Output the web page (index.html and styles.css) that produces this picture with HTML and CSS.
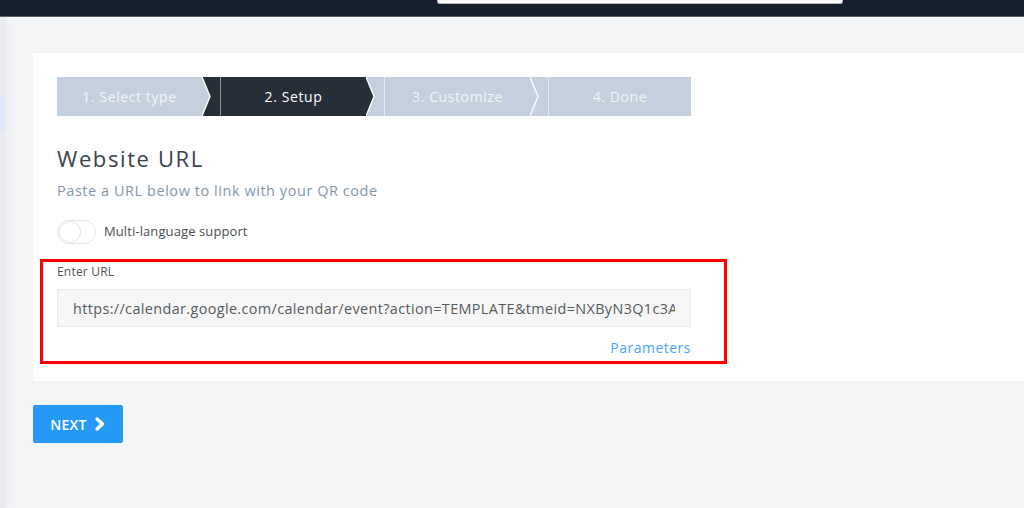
FILE: index.html
```html
<!DOCTYPE html>
<html lang="en">
<head>
<meta charset="utf-8">
<title>Website URL</title>
<link rel="stylesheet" href="styles.css">
</head>
<body>
<header class="topbar">
  <div class="search"></div>
</header>
<div class="layout">
  <aside class="sidebar"><div class="side-active"></div></aside>
  <main class="content">
    <section class="card">
      <nav class="steps">
        <div class="step light">1. Select type</div>
        <div class="bridge to-dark"><svg width="18" height="39" viewBox="0 0 18 39"><polygon points="0,0 8,19.5 0,39" fill="#c4d0dd"/><polyline points="0,0 8,19.5 0,39" fill="none" stroke="#fff" stroke-width="1.4"/></svg></div>
        <div class="step dark">2. Setup</div>
        <div class="bridge to-light"><svg width="18" height="39" viewBox="0 0 18 39"><polygon points="0,0 8,19.5 0,39" fill="#262e37"/><polyline points="0,0 8,19.5 0,39" fill="none" stroke="#fff" stroke-width="1.4"/></svg></div>
        <div class="step light">3. Customize</div>
        <div class="bridge to-light"><svg width="18" height="39" viewBox="0 0 18 39"><polygon points="0,0 8,19.5 0,39" fill="#c4d0dd"/><polyline points="0,0 8,19.5 0,39" fill="none" stroke="#fff" stroke-width="1.4"/></svg></div>
        <div class="step light last">4. Done</div>
      </nav>

      <h1 class="title">Website URL</h1>
      <p class="subtitle">Paste a URL below to link with your QR code</p>

      <label class="toggle-row">
        <span class="toggle"><span class="knob"></span></span>
        <span class="toggle-label">Multi-language support</span>
      </label>

      <div class="url-group">
        <div class="highlight"></div>
        <div class="field-label">Enter URL</div>
        <input class="url-input" type="text" readonly value="https://calendar.google.com/calendar/event?action=TEMPLATE&amp;tmeid=NXByN3Q1c3A4bWZzaGpkNmJvZ2R2aGN0">
        <div class="params-row"><a class="params" href="#">Parameters</a></div>
      </div>
    </section>

    <button class="next-btn" type="button">NEXT
      <svg width="12" height="14" viewBox="0 0 12 14"><polyline points="3,2 8.5,7 3,12" fill="none" stroke="#fff" stroke-width="3.2" stroke-linecap="round" stroke-linejoin="round"/></svg>
    </button>
  </main>
</div>
</body>
</html>
```

FILE: styles.css
```css
* { box-sizing: border-box; }

html, body {
  margin: 0;
  padding: 0;
  height: 100%;
}

body {
  font-family: "Open Sans", "Liberation Sans", sans-serif;
  background: #f3f4f6;
  overflow: hidden;
  display: flex;
  flex-direction: column;
}

.topbar {
  height: 17px;
  flex: none;
  background: #16202d;
  border-bottom: 1px solid #5a626c;
  position: relative;
}

.search {
  position: absolute;
  left: 437px;
  top: 0;
  width: 406px;
  height: 4px;
  background: #ffffff;
  border: 1px solid #b8bcc2;
  border-top: none;
  border-radius: 0 0 3px 3px;
}

.layout {
  flex: 1;
  display: flex;
}

.sidebar {
  width: 5px;
  flex: none;
  background: #e9ebee;
  padding-top: 79px;
  box-shadow: 2px 0 6px rgba(0, 0, 0, 0.04);
}

.side-active {
  height: 35px;
  background: #dde9f8;
}

.content {
  flex: 1;
  padding: 36px 0 0 28px;
}

.card {
  background: #ffffff;
  padding: 24px 24px 18px 24px;
  height: 328px;
}

.steps {
  display: flex;
  height: 39px;
  width: 634px;
}

.step {
  flex: none;
  width: 145px;
  height: 39px;
  display: flex;
  align-items: center;
  justify-content: center;
  font-size: 14px;
  font-weight: 500;
  letter-spacing: 0.6px;
}

.step.light {
  background: #c4d0dd;
  color: #f1f4f8;
}

.step.dark {
  background: #262e37;
  color: #ffffff;
  border-left: 1px solid #8e959d;
  width: 146px;
}

.bridge + .step.light {
  border-left: 1px solid #e6ebf1;
  width: 146px;
}

.bridge + .step.last {
  width: 143px;
}

.bridge {
  flex: none;
  width: 18px;
  height: 39px;
}

.bridge svg { display: block; }

.bridge.to-dark { background: #262e37; }
.bridge.to-light { background: #c4d0dd; }

.title {
  margin: 28px 0 0 0;
  font-size: 22px;
  line-height: 28px;
  font-weight: 400;
  letter-spacing: 1.6px;
  color: #39424d;
}

.subtitle {
  margin: 9px 0 0 0;
  font-size: 14.5px;
  line-height: 20px;
  color: #8597ab;
  letter-spacing: 0.55px;
}

.toggle-row {
  display: flex;
  align-items: center;
  gap: 8px;
  margin-top: 19px;
}

.toggle {
  width: 39px;
  height: 24px;
  border: 1px solid #e2e5e9;
  border-radius: 12px;
  background: #ffffff;
  display: flex;
  align-items: center;
  padding: 0 1px;
}

.knob {
  width: 22px;
  height: 22px;
  border-radius: 50%;
  background: #ffffff;
  border: 1px solid #e2e5e9;
}

.toggle-label {
  font-size: 13px;
  color: #4a4f55;
  letter-spacing: 0.1px;
  position: relative;
  top: -1px;
}

.url-group {
  position: relative;
  margin-top: 20px;
  width: 634px;
}

.highlight {
  position: absolute;
  left: -17px;
  top: -5px;
  width: 687px;
  height: 105px;
  border: 3px solid #ff0000;
  pointer-events: none;
}

.field-label {
  font-size: 12px;
  line-height: 16px;
  color: #4f555b;
  letter-spacing: 0.2px;
}

.url-input {
  display: block;
  margin-top: 9px;
  width: 634px;
  height: 38px;
  border: 1px solid #ebebeb;
  border-radius: 2px;
  background: #f6f6f6;
  padding: 0 15px;
  font-family: "Open Sans", "Liberation Sans", sans-serif;
  font-size: 14.4px;
  letter-spacing: 0.38px;
  color: #555a60;
  outline: none;
}

.params-row {
  display: flex;
  justify-content: flex-end;
  margin-top: 11px;
}

.params {
  font-size: 14px;
  line-height: 20px;
  color: #4aa6f5;
  text-decoration: none;
  letter-spacing: 0.5px;
}

.next-btn {
  margin-top: 24px;
  width: 90px;
  height: 38px;
  background: #2699f6;
  border: none;
  border-radius: 2px;
  color: #ffffff;
  font-family: "Open Sans", "Liberation Sans", sans-serif;
  font-size: 14px;
  font-weight: 600;
  letter-spacing: 0.3px;
  display: flex;
  align-items: center;
  justify-content: center;
  gap: 7px;
  padding: 0;
}

.next-btn svg { display: block; }
```
